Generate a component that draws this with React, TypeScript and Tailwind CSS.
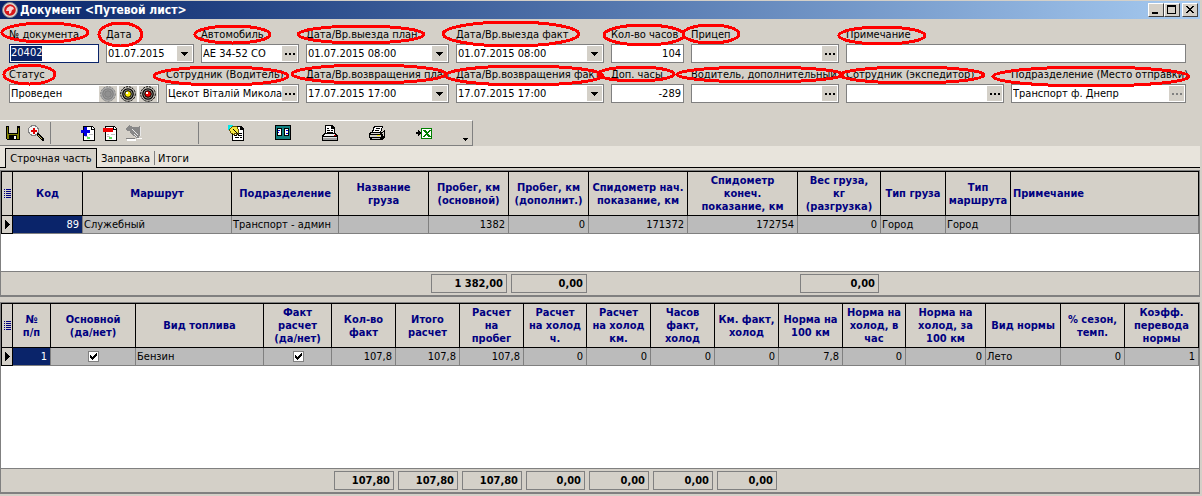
import React from "react";

type Kind = "text" | "date" | "lookup" | "number";

interface FieldProps {
  id: string;
  label: string;
  value?: string;
  kind?: Kind;
  disabled?: boolean;
  spill?: boolean;
}

function Field({ id, label, value = "", kind = "text", disabled = false, spill = false }: FieldProps) {
  return (
    <div className="min-w-0">
      <label
        htmlFor={id}
        className={"block h-[18px] whitespace-nowrap leading-[18px] " + (spill ? "" : "overflow-hidden")}
      >
        {label}
      </label>
      <div className="flex h-[19px] items-center border border-[#808080] bg-white pr-px">
        <input
          id={id}
          defaultValue={value}
          className={
            "h-full w-0 min-w-0 flex-1 bg-transparent pl-px outline-none " +
            (kind === "number" ? "pr-px text-right" : "")
          }
        />
        {kind === "date" && (
          <button aria-label={label + ": выбрать"} className="flex h-[15px] w-[15px] items-center justify-center bg-[#d4d0c8]">
            <svg width="7" height="4" shapeRendering="crispEdges">
              <path d="M0 0h7v1h-1v1h-1v1h-1v1h-1v-1h-1v-1h-1v-1h-1z" />
            </svg>
          </button>
        )}
        {kind === "lookup" && (
          <button
            aria-label={label + ": открыть"}
            disabled={disabled}
            className={
              "flex h-[15px] w-[15px] items-center justify-center bg-[#d4d0c8] " +
              (disabled ? "text-[#808080]" : "text-black")
            }
          >
            <svg width="10" height="2" fill="currentColor" shapeRendering="crispEdges">
              <path d="M0 0h2v2h-2zM4 0h2v2h-2zM8 0h2v2h-2z" />
            </svg>
          </button>
        )}
      </div>
    </div>
  );
}

function Lamp({ fill, off = false, label }: { fill: string; off?: boolean; label: string }) {
  const dark = off ? "#808080" : "#000";
  return (
    <button aria-label={label} className="flex h-4 w-[18px] shrink-0 items-center justify-center bg-[#d4d0c8]">
      <svg width="16" height="16" viewBox="0 0 16 16">
        <circle cx="8" cy="8" r="7.3" fill={off ? "#b0b0b0" : "#c8c4bc"} stroke={dark} strokeDasharray="2.4 0.8" />
        <circle cx="8" cy="8" r="5.2" fill={off ? "#a0a0a0" : "#a8a49c"} stroke={dark} strokeWidth="1.3" />
        <circle cx="8" cy="8" r="3.3" fill={fill} stroke={dark} />
        {!off && <rect x="6" y="6" width="2" height="2" fill="#fff" />}
      </svg>
    </button>
  );
}

function CaptionButton({ label, children }: { label: string; children: React.ReactNode }) {
  return (
    <button
      aria-label={label}
      className="h-[14px] w-4 border border-t-white border-l-white border-r-[#404040] border-b-[#404040] bg-[#d4d0c8]"
    >
      <svg width="14" height="12" shapeRendering="crispEdges">
        {children}
      </svg>
    </button>
  );
}

function ToolButton({ label, children, className = "" }: { label: string; children: React.ReactNode; className?: string }) {
  return (
    <button aria-label={label} className={"h-4 w-4 shrink-0 " + className}>
      <svg width="16" height="16" viewBox="0 0 16 16" shapeRendering="crispEdges">
        {children}
      </svg>
    </button>
  );
}

function Sheet() {
  return (
    <>
      <path d="M2 1h9l3 3v12h-12z" fill="#000" />
      <path d="M3 2h7v3h3v10h-10z" fill="#fff" />
      <path d="M11 2h1v1h1v1h-2z" fill="#fff" />
      <path d="M4 11h3v1h-3zM8 9h4v1h-4zM4 9h2v1h-2z" fill="#c0c0c0" />
      <path d="M6 12h3v2h-3z" fill="#5fe05f" />
    </>
  );
}

interface Column {
  title: string;
  width: string;
  value?: string;
  align?: "left" | "right";
  check?: boolean;
  total?: string;
  headLeft?: boolean;
}

const routeColumns: Column[] = [
  { title: "Код", width: "w-[70px]", value: "89", align: "right" },
  { title: "Маршрут", width: "w-[149px]", value: "Служебный" },
  { title: "Подразделение", width: "w-[107px]", value: "Транспорт - админ" },
  { title: "Название\nгруза", width: "w-[90px]" },
  { title: "Пробег, км\n(основной)", width: "w-[80px]", value: "1382", align: "right", total: "1 382,00" },
  { title: "Пробег, км\n(дополнит.)", width: "w-[80px]", value: "0", align: "right", total: "0,00" },
  { title: "Спидометр нач.\nпоказание, км", width: "w-[99px]", value: "171372", align: "right" },
  { title: "Спидометр\nконеч.\nпоказание, км", width: "w-[110px]", value: "172754", align: "right" },
  { title: "Вес груза,\nкг\n(разгрузка)", width: "w-[83px]", value: "0", align: "right", total: "0,00" },
  { title: "Тип груза", width: "w-[65px]", value: "Город" },
  { title: "Тип\nмаршрута", width: "w-[65px]", value: "Город" },
  { title: "Примечание", width: "", headLeft: true },
];

const fuelColumns: Column[] = [
  { title: "№\nп/п", width: "w-[38px]", value: "1", align: "right" },
  { title: "Основной\n(да/нет)", width: "w-[85px]", check: true },
  { title: "Вид топлива", width: "w-[128px]", value: "Бензин" },
  { title: "Факт\nрасчет\n(да/нет)", width: "w-[68px]", check: true },
  { title: "Кол-во\nфакт", width: "w-[64px]", value: "107,8", align: "right", total: "107,80" },
  { title: "Итого\nрасчет", width: "w-[64px]", value: "107,8", align: "right", total: "107,80" },
  { title: "Расчет\nна\nпробег", width: "w-[64px]", value: "107,8", align: "right", total: "107,80" },
  { title: "Расчет\nна холод\nч.", width: "w-[63px]", value: "0", align: "right", total: "0,00" },
  { title: "Расчет\nна холод\nкм.", width: "w-[64px]", value: "0", align: "right", total: "0,00" },
  { title: "Часов\nфакт,\nхолод", width: "w-[64px]", value: "0", align: "right", total: "0,00" },
  { title: "Км. факт,\nхолод", width: "w-[64px]", value: "0", align: "right", total: "0,00" },
  { title: "Норма на\n100 км", width: "w-[64px]", value: "7,8", align: "right" },
  { title: "Норма на\nхолод, в\nчас", width: "w-[63px]", value: "0", align: "right" },
  { title: "Норма на\nхолод, за\n100 км", width: "w-[80px]", value: "0", align: "right" },
  { title: "Вид нормы", width: "w-[75px]", value: "Лето" },
  { title: "% сезон,\nтемп.", width: "w-[64px]", value: "0", align: "right" },
  { title: "Коэфф.\nперевода\nнормы", width: "", value: "1", align: "right" },
];

function Tick({ label }: { label: string }) {
  return (
    <span className="mx-auto grid h-[11px] w-[11px]">
      <input
        type="checkbox"
        defaultChecked
        aria-label={label}
        className="peer col-start-1 row-start-1 h-[11px] w-[11px] appearance-none border border-[#808080] bg-white"
      />
      <svg
        className="pointer-events-none invisible col-start-1 row-start-1 peer-checked:visible"
        width="11"
        height="11"
        shapeRendering="crispEdges"
      >
        <path d="M2 4h1v1h1v1h1v-1h1v-1h1v-1h1v-1h1v3h-1v1h-1v1h-1v1h-1v1h-1v-1h-1v-1h-1z" />
      </svg>
    </span>
  );
}

function Grid({ columns, filler, name }: { columns: Column[]; filler: string; name: string }) {
  return (
    <div className="mr-[2px] border border-b-2 border-[#808080]">
      <table aria-label={name} className="w-full table-fixed border-separate border-spacing-0 bg-white">
        <colgroup>
          <col className="w-3" />
          {columns.map((c, i) => (
            <col key={i} className={c.width} />
          ))}
        </colgroup>
        <thead>
          <tr className="h-[45px] bg-[#d4d0c8] text-[#000080]">
            <th className="border border-black p-0">
              <svg className="mx-auto" width="7" height="9" shapeRendering="crispEdges" fill="#000080">
                <path d="M0 0h1v1h-1zM2 0h5v1h-5zM0 2h1v1h-1zM2 2h5v1h-5zM0 4h1v1h-1zM2 4h5v1h-5zM0 6h1v1h-1zM2 6h5v1h-5zM0 8h1v1h-1zM2 8h5v1h-5z" />
              </svg>
            </th>
            {columns.map((c, i) => (
              <th
                key={i}
                className={
                  "whitespace-pre border-y border-r border-black p-0 leading-[13px] " +
                  (c.headLeft ? "pl-[2px] text-left" : "text-center")
                }
              >
                {c.title}
              </th>
            ))}
          </tr>
        </thead>
        <tbody>
          <tr className="h-[18px] bg-[#bbbbbb]">
            <td className="border-x border-b border-black bg-[#d4d0c8] p-0">
              <svg className="mx-auto" width="5" height="9" shapeRendering="crispEdges">
                <path d="M0 0h1v1h1v1h1v1h1v1h1v1h-1v1h-1v1h-1v1h-1v1h-1z" />
              </svg>
            </td>
            {columns.map((c, i) => (
              <td
                key={i}
                className={
                  "overflow-hidden whitespace-nowrap border-b border-r border-[#808080] py-0 leading-[17px] " +
                  (c.align === "right" ? "pr-[3px] pl-0 text-right " : "pr-0 pl-px text-left ") +
                  (i === 0 ? "bg-[#0a246a] text-white" : "")
                }
              >
                {c.check ? <Tick label={c.title.replace(/\n/g, " ")} /> : c.value}
              </td>
            ))}
          </tr>
          <tr className={filler}>
            <td colSpan={columns.length + 1} className="p-0" />
          </tr>
        </tbody>
        <tfoot>
          <tr className="h-6 bg-[#d4d0c8] font-bold">
            <td className="border-t border-[#808080] p-0" />
            {columns.map((c, i) => (
              <td key={i} className="border-t border-[#808080] py-[2px] pr-[2px] pl-[2px]">
                {c.total && (
                  <div className="h-[19px] border border-[#808080] pr-[3px] text-right leading-[18px]">{c.total}</div>
                )}
              </td>
            ))}
          </tr>
        </tfoot>
      </table>
    </div>
  );
}

/* Marker rings over the field captions: left, top, right, bottom. */
const rings: [number, number, number, number][] = [
  [1, 22, 89, 43],
  [98, 22, 143, 47],
  [194, 25, 271, 44],
  [297, 25, 425, 44],
  [442, 21, 580, 47],
  [603, 24, 685, 46],
  [682, 24, 740, 44],
  [838, 26, 926, 45],
  [3, 64, 56, 85],
  [153, 66, 289, 86],
  [291, 64, 447, 84],
  [444, 65, 604, 86],
  [597, 66, 675, 82],
  [676, 66, 844, 83],
  [839, 66, 985, 84],
  [992, 66, 1190, 87],
];

export default function App() {
  return (
    <div className="relative min-h-screen bg-[#d4d0c8] pt-px font-['DejaVu_Sans_Condensed','DejaVu_Sans',sans-serif] text-[11px] text-black">
      <header className="mr-[2px] flex h-[18px] items-center bg-linear-to-r from-[#0a246a] to-[#a6caf0] pr-[2px] pl-[2px] text-white">
        <svg width="16" height="16" viewBox="0 0 16 16">
          <circle cx="8" cy="8" r="7.5" fill="#dcdcdc" stroke="#888" />
          <circle cx="8" cy="8" r="5.8" fill="#d81818" />
          <path d="M4 9l1-3 3-2 3 1 1 2-2 1-1 3-2 1 0-3z" fill="#fff" opacity=".8" />
        </svg>
        <h1 className="ml-[2px] flex-1 text-[12px] font-bold">Документ &lt;Путевой лист&gt;</h1>
        <CaptionButton label="Свернуть">
          <path d="M3 8h6v2h-6z" />
        </CaptionButton>
        <CaptionButton label="Развернуть">
          <path d="M2 1h9v9h-9zM3 3v6h7v-6z" fillRule="evenodd" />
        </CaptionButton>
        <span className="w-[2px]" />
        <CaptionButton label="Закрыть">
          <path d="M3 2h2v1h1v1h2v-1h1v-1h2v1h-1v1h-1v1h-1v1h1v1h1v1h1v1h-2v-1h-1v-1h-2v1h-1v1h-2v-1h1v-1h1v-1h1v-1h-1v-1h-1v-1h-1z" />
        </CaptionButton>
      </header>

      <form className="flex flex-col gap-[3px] pt-[7px] pr-4 pl-[9px]">
        <div className="grid grid-cols-[90px_88px_98px_143px_148px_73px_148px_1fr] gap-[7px]">
          <div>
            <label htmlFor="number" className="block h-[18px] whitespace-nowrap leading-[18px]">
              № документа
            </label>
            <div className="flex h-[19px] items-center border border-[#0a246a] bg-white pl-px">
              <input
                id="number"
                defaultValue="20402"
                className="h-[15px] field-sizing-content bg-[#0a246a] text-white outline-none"
              />
            </div>
          </div>
          <Field id="date" label="Дата" value="01.07.2015" kind="date" />
          <Field id="car" label="Автомобиль" value="АЕ 34-52 СО" kind="lookup" />
          <Field id="outPlan" label="Дата/Вр.выезда план" value="01.07.2015 08:00" kind="date" />
          <Field id="outFact" label="Дата/Вр.выезда факт" value="01.07.2015 08:00" kind="date" />
          <Field id="hours" label="Кол-во часов" value="104" kind="number" />
          <Field id="trailer" label="Прицеп" kind="lookup" />
          <Field id="note" label="Примечание" />
        </div>
        <div className="grid grid-cols-[150px_133px_143px_148px_73px_148px_158px_1fr] gap-[7px]">
          <div>
            <label htmlFor="status" className="block h-[18px] leading-[18px]">
              Статус
            </label>
            <div className="flex h-[19px] items-center gap-[2px] border border-[#808080] bg-white pr-px">
              <input id="status" defaultValue="Проведен" className="h-full w-0 flex-1 bg-transparent pl-px outline-none" />
              <Lamp fill="#909090" off label="Черновик" />
              <Lamp fill="#ffee00" label="Подготовлен" />
              <Lamp fill="#f00000" label="Проведен" />
            </div>
          </div>
          <Field id="driver" label="Сотрудник (Водитель)" value="Цекот Віталій Миколайович" kind="lookup" />
          <Field id="backPlan" label="Дата/Вр.возвращения план" value="17.07.2015 17:00" kind="date" />
          <Field id="backFact" label="Дата/Вр.возвращения факт" value="17.07.2015 17:00" kind="date" />
          <Field id="extraHours" label="Доп. часы" value="-289" kind="number" />
          <Field id="driver2" label="Водитель, дополнительный" kind="lookup" />
          <Field id="forwarder" label="Сотрудник (экспедитор)" kind="lookup" />
          <Field id="department" label="Подразделение (Место отправки)" value="Транспорт ф. Днепр" kind="lookup" disabled spill />
        </div>
      </form>

      <div className="mt-[17px] flex h-[26px] w-[473px] items-center border-t border-r border-b border-t-white border-r-[#808080] border-b-[#808080] pl-[5px]">
        <ToolButton label="Сохранить">
          <path d="M1 1h14v14h-13l-1-1z" />
          <path d="M2 2h1v7h-1zM13 3h1v6h-1z" fill="#808000" />
          <path d="M4 1h8v7h-8z" fill="#d4d0c8" />
          <path d="M2 9h12v1h-12zM2 10h2v4h-2zM12 10h2v4h-2z" fill="#808000" />
          <path d="M9 11h2v3h-2z" fill="#fff" />
        </ToolButton>
        <ToolButton label="Найти" className="ml-[7px]">
          <circle cx="5.5" cy="5.5" r="5" fill="#f4f4f4" stroke="#808080" />
          <path d="M5 3h2v2h2v2h-2v2h-2v-2h-2v-2h2z" fill="#e00000" />
          <path d="M9 8h2v1h1v1h1v1h1v1h1v1h1v3h-2v-1h-1v-1h-1v-1h-1v-1h-1v-1h-1z" fill="#000" />
          <path d="M10 10h1v1h1v1h1v1h1v1h-1v-1h-1v-1h-1v-1h-1z" fill="#c8b860" />
        </ToolButton>
        <span className="ml-[6px] h-[22px] w-px bg-[#808080]" />
        <ToolButton label="Добавить строку" className="ml-[30px]">
          <Sheet />
          <path d="M3 2h3v3h3v3h-3v3h-3v-3h-3v-3h3z" fill="#0000e0" />
        </ToolButton>
        <ToolButton label="Удалить строку" className="ml-[6px]">
          <Sheet />
          <path d="M0 3h10v4h-10z" fill="#f00000" />
        </ToolButton>
        <ToolButton label="Изменить" className="ml-[7px]">
          <path d="M0 3l3-3 4 2h4l3-1v9l-1 3h-3l-2-2-3-2-1-3-3 0z" fill="#888" />
          <path d="M6.500 4.500l6 6M8.500 9.500l3 3M14.500 2v9" fill="none" stroke="#e8e8e8" />
          <path d="M1 14h9v2h-9zM11 13h5v1h-5z" fill="#fff" />
          <path d="M0 13h9v1h-9z" fill="#808080" />
        </ToolButton>
        <span className="ml-[56px] h-[22px] w-px bg-[#808080]" />
        <ToolButton label="Свойства" className="ml-[29px]">
          <path d="M4 1h9l3 3v12h-12z" />
          <path d="M5 2h7v3h3v10h-10z" fill="#fff" />
          <path d="M7 8h3v1h-3zM11 8h3v1h-3zM6 10h3v1h-3zM10 10h4v1h-4zM7 12h4v1h-4zM12 12h2v1h-2z" />
          <path d="M0 0h5v2h-3v3h-2z" fill="#00e8e8" />
          <path d="M1.500 4.500l3-3h4l2 3v4l-1 1-2-1-2 1-3-2z" fill="#f4e840" stroke="#605000" />
          <path d="M5 4h1v1h1v1h1v1h1v1h1v1h1v1h-1v-1h-1v-1h-1v-1h-1v-1h-1v-1h-1z" />
        </ToolButton>
        <ToolButton label="Сравнить" className="ml-[31px]">
          <path d="M0 0h16v15h-16z" />
          <path d="M1 1h14v13h-14z" fill="#108080" />
          <path d="M2 3h5v8h-5zM9 3h5v8h-5z" />
          <path d="M3 4h3v6h-3zM10 4h3v6h-3z" fill="#fff" />
          <path d="M3 5h2v1h-2zM3 7h1v1h-1zM11 5h2v1h-2zM11 8h2v1h-2z" fill="#0000e0" />
        </ToolButton>
        <ToolButton label="Просмотр" className="ml-[31px]">
          <path d="M3 0h7l3 3v6h-10z" />
          <path d="M4 1h5v3h3v4h-8z" fill="#fff" />
          <path d="M5 3h2v1h-2zM5 5h3v1h-3zM9 5h2v1h-2zM5 7h6v1h-6z" />
          <path d="M2 8h12l2 3v5h-16v-5z" />
          <path d="M3 9h10l1 2h-12z" fill="#f4f4f4" />
          <path d="M1 12h14v1h-14z" fill="#e0e0e0" />
          <path d="M1 13h14v2h-14z" fill="#a0a0a0" />
          <path d="M12 10h2v1h-2z" fill="#d00" />
        </ToolButton>
        <ToolButton label="Печать" className="ml-[31px]">
          <path d="M5 1h9v1l-2 5h-9z" />
          <path d="M6 2h7l-2 5h-7z" fill="#fff" />
          <path d="M7 3h4v1h-4zM6 5h4v1h-4z" />
          <path d="M2 7h11l2-2h1v7l-3 3h-12v-2h-1v-5z" />
          <path d="M2 8h9v1h-9zM1 10h11v2h-11zM13 8h1v1h-1zM14 7h1v4h-1z" fill="#d4d0c8" />
          <path d="M8 10h3v1h-3z" fill="#ffee00" />
          <path d="M3 13h8v1h-8z" fill="#c0c0c0" />
        </ToolButton>
        <ToolButton label="Экспорт в Excel" className="ml-[31px]">
          <path d="M0 7h2v-2h1v1h1v1h1v2h-1v1h-1v1h-1v-2h-2z" />
          <path d="M5 3h11v11h-11z" fill="#008000" />
          <path d="M6 4h9v9h-9z" fill="#fff" />
          <path d="M7 5h3v1h1v1h1v-1h1v-1h2v1h-1v1h-1v1h-1v1h1v1h1v1h1v1h-3v-1h-1v-1h-1v1h-1v1h-2v-1h1v-1h1v-1h1v-1h-1v-1h-1v-1h-1z" fill="#008000" />
        </ToolButton>
        <button aria-label="Ещё" className="mt-[12px] ml-[31px] h-[6px] w-[5px]">
          <svg width="5" height="3" shapeRendering="crispEdges">
            <path d="M0 0h5v1h-1v1h-1v1h-1v-1h-1v-1h-1z" />
          </svg>
        </button>
      </div>

      <nav role="tablist" className="mr-[2px] flex h-[22px] items-stretch bg-[#e8e4dc] pt-[2px]">
        <span className="w-[5px] border-b border-black" />
        <button role="tab" aria-selected="true" className="w-[92px] border-t border-r border-l border-t-black border-r-black border-l-black bg-[#d4d0c8] pt-px">
          Строчная часть
        </button>
        <button role="tab" aria-selected="false" className="w-[57px] border-b border-black pt-[3px]">
          Заправка
        </button>
        <span className="flex w-px items-center border-b border-black">
          <span className="h-[14px] w-px bg-[#808080]" />
        </span>
        <button role="tab" aria-selected="false" className="border-b border-black pt-[3px] pl-[3px]">
          Итоги
        </button>
        <span className="flex-1 border-b border-black" />
      </nav>

      <main className="flex flex-col gap-[5px] pt-[2px]">
        <Grid columns={routeColumns} filler="h-[37px]" name="Строчная часть" />
        <Grid columns={fuelColumns} filler="h-[102px]" name="Топливо" />
      </main>

      <svg className="pointer-events-none absolute top-0 left-0" width="1202" height="100" fill="none" stroke="#f00" strokeWidth="3" shapeRendering="crispEdges" aria-hidden="true">
        {rings.map(([l, t, r, b], i) => (
          <ellipse key={i} cx={(l + r) / 2} cy={(t + b) / 2} rx={(r - l) / 2 - 1} ry={(b - t) / 2 - 1} />
        ))}
      </svg>
    </div>
  );
}
